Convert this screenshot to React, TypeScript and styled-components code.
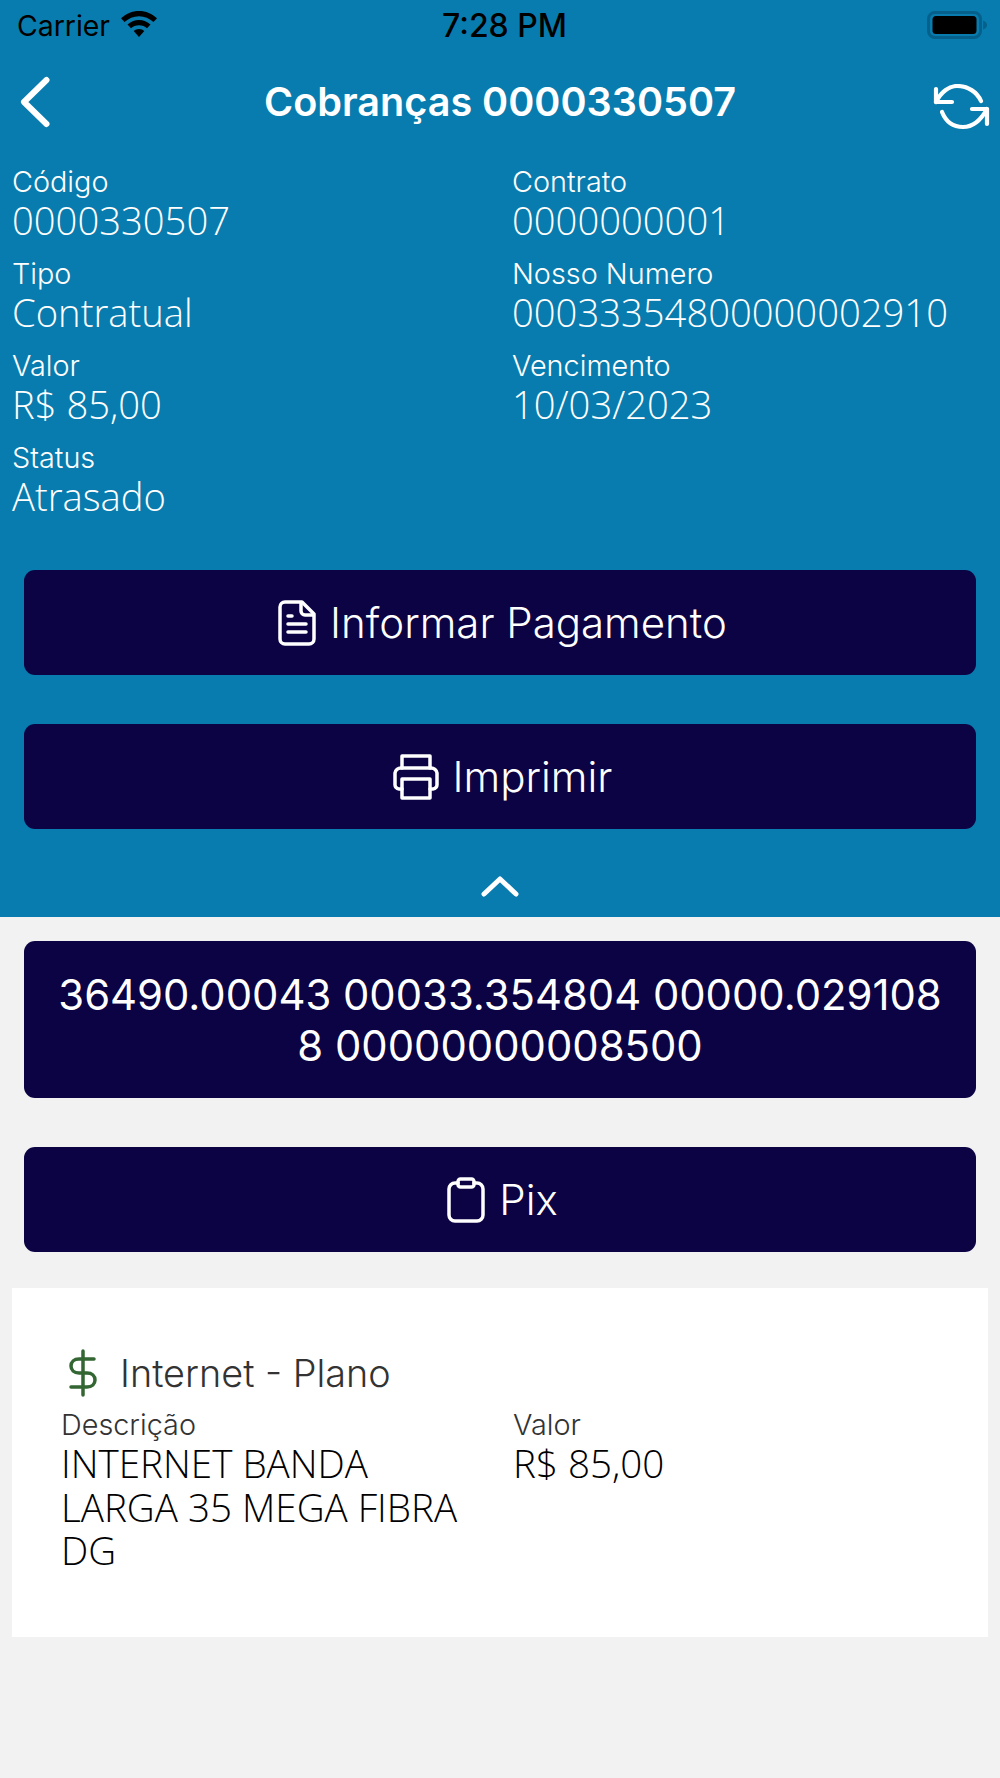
import React from "react";
import styled, { createGlobalStyle } from "styled-components";

const Global = createGlobalStyle`
  html, body { margin: 0; padding: 0; background: #f2f2f2; }
  * { box-sizing: border-box; }
`;

const Page = styled.div`
  width: 1000px;
  height: 1778px;
  background: #f2f2f2;
  font-family: Inter, "Liberation Sans", sans-serif;
  overflow: hidden;
`;

const Top = styled.section`
  background: #087cae;
  height: 917px;
  display: flex;
  flex-direction: column;
`;

const StatusBar = styled.div`
  height: 50px;
  display: grid;
  grid-template-columns: 1fr auto 1fr;
  align-items: center;
  padding: 0 13px 0 17px;
  color: #000;
  font-size: 28.4px;
`;

const StatusLeft = styled.div`
  display: flex;
  align-items: center;
  gap: 11px;
`;

const Clock = styled.div`
  font-weight: 500;
  font-size: 32px;
  margin-left: 5px;
`;

const StatusRight = styled.div`
  display: flex;
  justify-content: flex-end;
`;

const Header = styled.header`
  height: 104px;
  display: grid;
  grid-template-columns: 70px 1fr 78px;
  align-items: center;
  color: #fff;
  padding: 0 9px 0 17px;
`;

const Title = styled.h1`
  margin: 0;
  font-size: 39.6px;
  font-weight: 600;
  text-align: center;
  white-space: nowrap;
`;

const HeaderEnd = styled.div`
  display: flex;
  justify-content: flex-end;
  padding-top: 12px;
`;

const Fields = styled.div`
  display: grid;
  grid-template-columns: 500px 1fr;
  row-gap: 15px;
  padding: 9px 0 0 12px;
`;

const FieldBox = styled.div`
  min-width: 0;
`;

const Label = styled.div<{ $dark?: boolean }>`
  font-size: 28.8px;
  line-height: ${(p) => (p.$dark ? "35px" : "37px")};
  font-weight: 300;
  color: ${(p) => (p.$dark ? "#333" : "#fff")};
`;

const Value = styled.div<{ $dark?: boolean }>`
  font-family: "Open Sans", sans-serif;
  font-weight: 300;
  font-size: ${(p) => (p.$dark ? "38.6px" : "38.2px")};
  line-height: ${(p) => (p.$dark ? "43.5px" : "40px")};
  color: ${(p) => (p.$dark ? "#000" : "#fff")};
`;

const ButtonStack = styled.div<{ $pad: string }>`
  display: flex;
  flex-direction: column;
  gap: 49px;
  padding: ${(p) => p.$pad};
`;

const ActionButton = styled.div<{ $h: number; $size?: number }>`
  height: ${(p) => p.$h}px;
  background: #0b0343;
  border-radius: 11px;
  color: #fff;
  font-size: ${(p) => p.$size ?? 42}px;
  font-weight: 300;
  line-height: 51px;
  display: flex;
  align-items: center;
  justify-content: center;
  gap: 14px;
  padding-left: 5px;
  text-align: center;
`;

const CodeText = styled.span`
  margin-left: -5px;
  padding-top: 2px;
  font-weight: 400;
`;

const Collapse = styled.div`
  display: flex;
  justify-content: center;
  padding-top: 46px;
`;

const Card = styled.section`
  margin: 36px 12px 0;
  height: 349px;
  background: #fff;
  padding: 61px 48px 0 49px;
`;

const CardTitle = styled.div`
  display: flex;
  align-items: center;
  gap: 22px;
  font-size: 37.8px;
  line-height: 44px;
  font-weight: 300;
  color: #333;
  padding-left: 7px;
`;

const CardFields = styled.div`
  display: grid;
  grid-template-columns: 452px 1fr;
  padding-top: 10px;
`;

const FieldValueNarrow = styled.div`
  width: 410px;
`;

const Sv = styled.svg`
  display: block;
  flex: none;
`;

const W = { fill: "none", stroke: "#fff", strokeLinecap: "round", strokeLinejoin: "round" } as const;

const Wifi = () => (
  <Sv width="36" height="28" viewBox="0 0 36 28">
    <path d="M18 0C11 0 5 2.700 0 7.300L3.500 11C7.500 7.400 12.500 5.200 18 5.200S28.500 7.400 32.500 11L36 7.300C31 2.700 25 0 18 0Z" fill="#000" />
    <path d="M18 9C13.500 9 9.500 10.700 6.500 13.600L10 17.200C12 15.300 14.800 14.200 18 14.200S24 15.300 26 17.200L29.500 13.600C26.500 10.700 22.500 9 18 9Z" fill="#000" />
    <path d="M18 18C15.900 18 14 18.700 12.700 20L18 26L23.300 20C22 18.700 20.100 18 18 18Z" fill="#000" />
  </Sv>
);

const Battery = () => (
  <Sv width="60" height="28" viewBox="0 0 60 28">
    <rect x="1.500" y="1.500" width="52" height="25" rx="6.500" fill="none" stroke="#05618b" strokeWidth="3" />
    <rect x="5.500" y="5" width="44" height="18" rx="3.500" fill="#000" />
    <path d="M56 9.500C58.500 10.500 60 12 60 14S58.500 17.500 56 18.500Z" fill="#05618b" />
  </Sv>
);

const Back = () => (
  <Sv width="34" height="52" viewBox="0 0 34 52">
    <path d="M29.500 4L7 26L29.500 48" {...W} strokeWidth="6" />
  </Sv>
);

const Refresh = () => (
  <Sv width="58" height="48" viewBox="33 25 58 48">
    <path d="M36 30V43H52" {...W} strokeWidth="4.200" />
    <path d="M36 43C41 33 49 27 57 27C68 27 77 33 81 42" {...W} strokeWidth="4.200" />
    <path d="M87 65V50H72" {...W} strokeWidth="4.200" />
    <path d="M87 50C81 61 73 68 63 68C53 68 46 63 42 53" {...W} strokeWidth="4.200" />
  </Sv>
);

const FileIcon = () => (
  <Sv width="38" height="46" viewBox="0 0 38 46">
    <path d="M24 2H7A5 5 0 0 0 2 7V39A5 5 0 0 0 7 44H31A5 5 0 0 0 36 39V14Z" {...W} strokeWidth="3.500" />
    <path d="M23 3V11A4 4 0 0 0 27 15H35" {...W} strokeWidth="3.500" />
    <path d="M10 16H14M10 24H28M10 32H28" {...W} strokeWidth="3.500" />
  </Sv>
);

const PrinterIcon = () => (
  <Sv width="46" height="46" viewBox="0 0 46 46">
    <path d="M9 14V2H37V14" {...W} strokeWidth="3.500" />
    <path d="M9 35H6A4.500 4.500 0 0 1 2 30V19A6 6 0 0 1 8 14H38A6 6 0 0 1 44 19V30A4.500 4.500 0 0 1 40 35H37" {...W} strokeWidth="3.500" />
    <rect x="9" y="25" width="28" height="19" {...W} strokeWidth="3.500" />
  </Sv>
);

const ClipIcon = () => (
  <Sv width="38" height="46" viewBox="0 0 38 46">
    <path d="M11 6H8A6 6 0 0 0 2 12V38A6 6 0 0 0 8 44H30A6 6 0 0 0 36 38V12A6 6 0 0 0 30 6H27" {...W} strokeWidth="3.500" />
    <rect x="11" y="2" width="16" height="8" rx="2.500" {...W} strokeWidth="3.500" />
  </Sv>
);

const ChevronUp = () => (
  <Sv width="38" height="22" viewBox="0 0 38 22">
    <path d="M3 19L19 4L35 19" {...W} strokeWidth="5" />
  </Sv>
);

const Dollar = () => (
  <Sv width="30" height="48" viewBox="0 0 30 48">
    <path d="M15 2V46" fill="none" stroke="#336633" strokeWidth="3.500" strokeLinecap="round" />
    <path d="M26 10H11C6 10 3 13 3 17S6 24 11 24H19C24 24 27 27 27 31S24 38 19 38H3" fill="none" stroke="#336633" strokeWidth="3.500" strokeLinecap="round" />
  </Sv>
);

const Field = ({ label, value }: { label: string; value: string }) => (
  <FieldBox>
    <Label>{label}</Label>
    <Value>{value}</Value>
  </FieldBox>
);

export default function App() {
  return (
    <Page>
      <Global />
      <Top>
        <StatusBar>
          <StatusLeft>
            <span>Carrier</span>
            <Wifi />
          </StatusLeft>
          <Clock>7:28 PM</Clock>
          <StatusRight>
            <Battery />
          </StatusRight>
        </StatusBar>
        <Header>
          <Back />
          <Title>Cobranças 0000330507</Title>
          <HeaderEnd>
            <Refresh />
          </HeaderEnd>
        </Header>
        <Fields>
          <Field label="Código" value="0000330507" />
          <Field label="Contrato" value="0000000001" />
          <Field label="Tipo" value="Contratual" />
          <Field label="Nosso Numero" value="00033354800000002910" />
          <Field label="Valor" value="R$ 85,00" />
          <Field label="Vencimento" value="10/03/2023" />
          <Field label="Status" value="Atrasado" />
        </Fields>
        <ButtonStack $pad="54px 24px 0">
          <ActionButton $h={105}>
            <FileIcon />
            <span>Informar Pagamento</span>
          </ActionButton>
          <ActionButton $h={105}>
            <PrinterIcon />
            <span>Imprimir</span>
          </ActionButton>
        </ButtonStack>
        <Collapse>
          <ChevronUp />
        </Collapse>
      </Top>
      <ButtonStack $pad="24px 24px 0">
        <ActionButton $h={157} $size={41.8}>
          <CodeText>
            36490.00043 00033.354804 00000.029108
            <br />
            8 00000000008500
          </CodeText>
        </ActionButton>
        <ActionButton $h={105}>
          <ClipIcon />
          <span>Pix</span>
        </ActionButton>
      </ButtonStack>
      <Card>
        <CardTitle>
          <Dollar />
          <span>Internet - Plano</span>
        </CardTitle>
        <CardFields>
          <FieldBox>
            <Label $dark>Descrição</Label>
            <FieldValueNarrow>
              <Value $dark>INTERNET BANDA LARGA 35 MEGA FIBRA DG</Value>
            </FieldValueNarrow>
          </FieldBox>
          <FieldBox>
            <Label $dark>Valor</Label>
            <Value $dark>R$ 85,00</Value>
          </FieldBox>
        </CardFields>
      </Card>
    </Page>
  );
}
